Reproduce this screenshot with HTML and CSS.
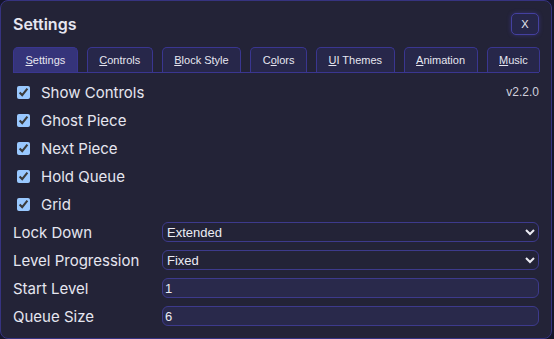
FILE: index.html
```html
<!DOCTYPE html>
<html lang="en">
<head>
    <meta charset="UTF-8">
    <meta name="viewport" content="width=device-width, initial-scale=1.0">
    <title>Settings</title>
    <link rel="stylesheet" href="styles.css">
</head>
<body>

<div class="dialog">
    <div class="header">
        <div class="title">Settings</div>
        <button class="close">X</button>
    </div>

    <div class="tabs">
        <button class="tab active"><u>S</u>ettings</button>
        <button class="tab"><u>C</u>ontrols</button>
        <button class="tab"><u>B</u>lock Style</button>
        <button class="tab">C<u>o</u>lors</button>
        <button class="tab"><u>U</u>I Themes</button>
        <button class="tab"><u>A</u>nimation</button>
        <button class="tab"><u>M</u>usic</button>
    </div>

    <div class="content">
        <div class="check-row">
            <label><input type="checkbox" checked> Show Controls</label>
            <span class="version">v2.2.0</span>
        </div>
        <div class="check-row"><label><input type="checkbox" checked> Ghost Piece</label></div>
        <div class="check-row"><label><input type="checkbox" checked> Next Piece</label></div>
        <div class="check-row"><label><input type="checkbox" checked> Hold Queue</label></div>
        <div class="check-row"><label><input type="checkbox" checked> Grid</label></div>

        <div class="field-row">
            <label>Lock Down</label>
            <select class="field">
                <option>Extended</option>
                <option>Infinite</option>
                <option>Classic</option>
            </select>
        </div>
        <div class="field-row">
            <label>Level Progression</label>
            <select class="field">
                <option>Fixed</option>
                <option>Variable</option>
            </select>
        </div>
        <div class="field-row">
            <label>Start Level</label>
            <input class="field input" type="text" value="1">
        </div>
        <div class="field-row">
            <label>Queue Size</label>
            <input class="field input" type="text" value="6">
        </div>
    </div>
</div>

</body>
</html>
```

FILE: styles.css
```css
body {
    margin: 0;
    background-color: #15152a;
    color-scheme: dark;
    font-family: Inter, "Noto Sans", sans-serif;
    color: #e6e6f0;
}
.dialog {
    width: 526px;
    height: 337px;
    padding: 0 12px;
    background-color: #232337;
    border: 1px solid #363380;
    border-radius: 8px;
}
.header {
    display: flex;
    justify-content: space-between;
    align-items: center;
    padding-top: 12px;
    height: 22px;
}
.title {
    font-size: 16px;
    font-weight: 600;
}
.close {
    width: 28px;
    height: 22px;
    padding: 0;
    font-family: "Liberation Sans", sans-serif;
    font-size: 11px;
    color: #e6e6f0;
    background-color: #26264a;
    border: 1px solid #4440a0;
    border-radius: 5px;
    box-shadow: 0 0 4px rgba(80, 70, 200, 0.4);
}
.tabs {
    display: flex;
    gap: 9px;
    margin-top: 12px;
    border-bottom: 1px solid #3a3690;
}
.tab {
    flex-shrink: 0;
    height: 25px;
    padding: 0 11.5px;
    white-space: nowrap;
    font-family: "Liberation Sans", sans-serif;
    font-size: 11px;
    color: #e6e6f0;
    background-color: #27274a;
    border: 1px solid #3a3690;
    border-bottom: none;
    border-radius: 5px 5px 0 0;
}
.tab:last-child {
    flex: 1;
}
.tab.active {
    background-color: #35347a;
}
.content {
    margin-top: 5px;
}
.check-row {
    display: flex;
    justify-content: space-between;
    align-items: center;
    height: 28px;
}
.check-row label {
    display: flex;
    align-items: center;
    font-size: 15px;
}
.check-row input {
    width: 13px;
    height: 13px;
    margin: 0 11px 0 4px;
}
.version {
    font-family: "Liberation Sans", sans-serif;
    font-size: 12px;
    color: #cfcfdc;
}
.field-row {
    display: flex;
    align-items: center;
    height: 28px;
}
.field-row label {
    width: 149px;
    font-size: 15px;
}
.field {
    flex: 1;
    height: 20px;
    box-sizing: border-box;
    padding: 0;
    font-family: "Liberation Sans", sans-serif;
    font-size: 13px;
    color: #ececf4;
    background-color: #232337;
    border: 1px solid #3d3a8c;
    border-radius: 6px;
    outline: none;
}
.field.input {
    padding: 0 2px;
    background-color: #29294b;
}
```
